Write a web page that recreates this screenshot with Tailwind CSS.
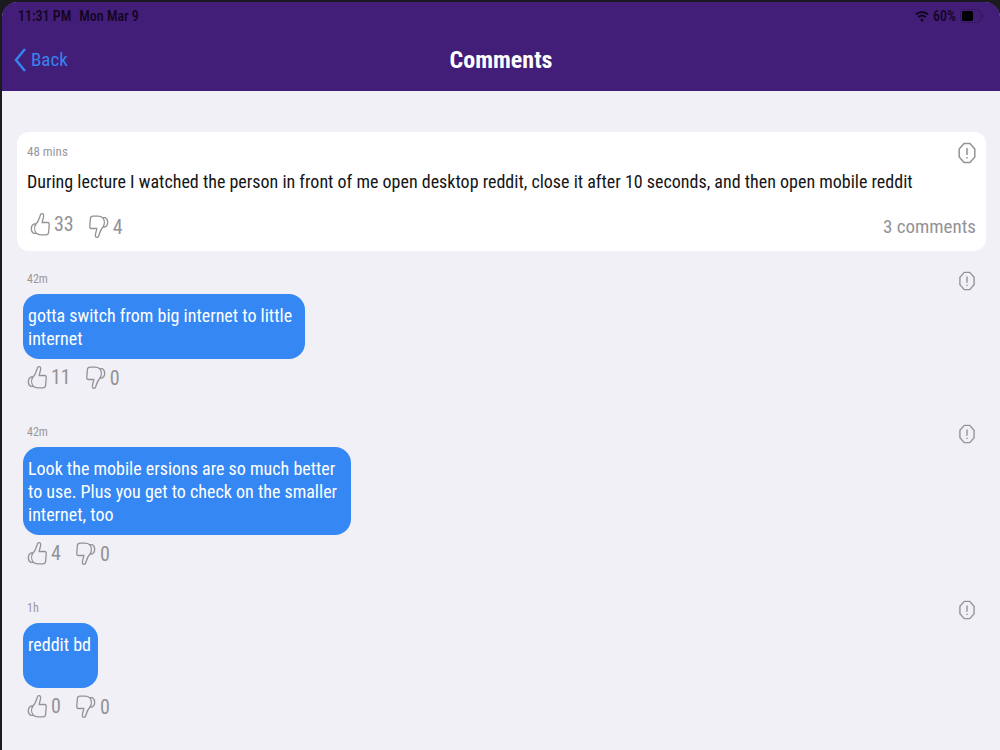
<!DOCTYPE html>
<html lang="en">
<head>
    <meta charset="UTF-8">
    <meta name="viewport" content="width=device-width, initial-scale=1.0">
    <title>Comments</title>
    <script src="https://cdn.jsdelivr.net/npm/@tailwindcss/browser@4"></script>
</head>
<body class="min-h-screen bg-[#1b1a1e] pt-0.5 pl-0.5 font-['Roboto_Condensed',Roboto,sans-serif]">
    <!-- Shared icons -->
    <svg class="hidden" aria-hidden="true">
        <symbol id="thumb" viewBox="0 0 20 24">
            <path d="M6 12 C8.500 9.500 9.200 6.500 10.200 3.500 C10.800 0.800 14 0.800 13.600 4.200 C13.400 6.500 12.400 8 12.200 10.500 L17.500 10.500 C19 10.500 19.300 11.500 19.200 13 L18.600 20.500 C18.400 22 17.700 22.800 16 22.800 L11 22.800 C9 22.800 7.500 22.300 6.300 21.300 C4.200 18.500 4.200 14.500 6 12 Z M6 12 L4 12 C0.500 13.500 0.500 19.500 3.600 21.300 L6.300 21.300" />
        </symbol>
        <symbol id="report" viewBox="0 0 18 22">
            <path d="M6 1.500 L12 1.500 L16.800 7 L16.800 15 L12 20.500 L6 20.500 L1.200 15 L1.200 7 Z M9 6 L9 13 M9 15 L9 16.500" />
        </symbol>
    </svg>

    <div class="min-h-[calc(100vh-2px)] rounded-t-2xl bg-[#f1f0f6]">
        <header class="h-[89px] rounded-t-[15px] bg-[#421e78]">
            <!-- Status bar -->
            <div class="flex h-7 items-center justify-between px-4 text-sm font-medium text-[#12051f]">
                <div class="flex gap-2">
                    <span>11:31 PM</span>
                    <span>Mon Mar 9</span>
                </div>
                <div class="flex items-center gap-1">
                    <svg class="h-3 w-3.5" viewBox="0 0 14 12" fill="none" stroke="currentColor" stroke-width="2">
                        <path d="M1 4.500 C4.500 1 9.500 1 13 4.500 M3.300 7.300 C5.500 5.200 8.500 5.200 10.700 7.300" />
                        <circle cx="7" cy="10" r="1.500" fill="currentColor" stroke="none" />
                    </svg>
                    <span>60%</span>
                    <svg class="h-3.5 w-6" viewBox="0 0 24 14">
                        <rect x="0.500" y="0.500" width="20" height="13" rx="3" fill="none" stroke="#351861" />
                        <rect x="2" y="2" width="11" height="10" rx="1.500" fill="#000" />
                        <path d="M22.500 5 L22.500 9" stroke="#351861" stroke-width="1.500" />
                    </svg>
                </div>
            </div>
            <!-- Navigation bar -->
            <nav class="grid grid-cols-[1fr_auto_1fr] items-center px-3 pt-4">
                <a href="#" class="flex items-center gap-[5px] text-[19px] leading-7 text-[#3583ee]">
                    <svg class="h-6 w-3" viewBox="0 0 12 24" fill="none" stroke="currentColor" stroke-width="2.500"><path d="M11 1 L2 12 L11 23" /></svg>
                    Back
                </a>
                <h1 class="text-2xl leading-7 font-bold text-white">Comments</h1>
            </nav>
        </header>

        <main class="pt-[41px] pr-3.5 pb-6 pl-[15px]">
            <!-- Original post -->
            <article class="rounded-xl bg-white px-2.5 pt-2.5 pb-3">
                <div class="flex h-5 justify-between">
                    <time class="text-[13px] leading-5 text-[#98989d]">48 mins</time>
                    <button type="button" aria-label="Report post" class="h-[22px] text-[#929297]"><svg class="h-[22px] w-[18px]" fill="none" stroke="currentColor" stroke-width="1.500"><use href="#report" /></svg></button>
                </div>
                <p class="mt-2 text-lg leading-6 text-[#141416]">During lecture I watched the person in front of me open desktop reddit, close it after 10 seconds, and then open mobile reddit</p>
                <div class="mt-[18px] flex items-end justify-between text-[#929297]">
                    <div class="flex gap-[15px] pl-[3px] text-xl leading-6">
                        <button type="button" aria-label="Like" class="flex items-center gap-1 pb-[3px]"><svg class="h-6 w-5" fill="none" stroke="currentColor" stroke-width="1.300"><use href="#thumb" /></svg>33</button>
                        <button type="button" aria-label="Dislike" class="flex items-center gap-1 pt-[3px]"><svg class="h-6 w-5 rotate-180" fill="none" stroke="currentColor" stroke-width="1.300"><use href="#thumb" /></svg>4</button>
                    </div>
                    <span class="text-[19px] leading-6">3 comments</span>
                </div>
            </article>

            <!-- Replies -->
            <ul class="flex flex-col gap-8 px-2.5 pt-[18px]">
                <li>
                    <div class="flex h-5 justify-between">
                        <time class="text-xs leading-5 text-[#98989d]">42m</time>
                        <button type="button" aria-label="Report comment" class="mt-0.5 h-5 text-[#929297]"><svg class="h-5 w-[18px]" fill="none" stroke="currentColor" stroke-width="1.500"><use href="#report" /></svg></button>
                    </div>
                    <p class="mt-[5px] -ml-1 min-h-[65px] w-[282px] rounded-2xl bg-[#3587f3] px-[5px] pt-[10px] pb-[9px] text-lg leading-[23px] text-white">gotta switch from big internet to little internet</p>
                    <div class="mt-1.5 flex gap-[15px] text-xl leading-6 text-[#929297]">
                        <button type="button" aria-label="Like" class="flex items-center gap-1 pb-px"><svg class="h-6 w-5" fill="none" stroke="currentColor" stroke-width="1.300"><use href="#thumb" /></svg>11</button>
                        <button type="button" aria-label="Dislike" class="flex items-center gap-1 pt-px"><svg class="h-6 w-5 rotate-180" fill="none" stroke="currentColor" stroke-width="1.300"><use href="#thumb" /></svg>0</button>
                    </div>
                </li>
                <li>
                    <div class="flex h-5 justify-between">
                        <time class="text-xs leading-5 text-[#98989d]">42m</time>
                        <button type="button" aria-label="Report comment" class="mt-0.5 h-5 text-[#929297]"><svg class="h-5 w-[18px]" fill="none" stroke="currentColor" stroke-width="1.500"><use href="#report" /></svg></button>
                    </div>
                    <p class="mt-[5px] -ml-1 min-h-[65px] w-[328px] rounded-2xl bg-[#3587f3] px-[5px] pt-[10px] pb-[9px] text-lg leading-[23px] text-white">Look the mobile ersions are so much better to use. Plus you get to check on the smaller internet, too</p>
                    <div class="mt-1.5 flex gap-[15px] text-xl leading-6 text-[#929297]">
                        <button type="button" aria-label="Like" class="flex items-center gap-1 pb-px"><svg class="h-6 w-5" fill="none" stroke="currentColor" stroke-width="1.300"><use href="#thumb" /></svg>4</button>
                        <button type="button" aria-label="Dislike" class="flex items-center gap-1 pt-px"><svg class="h-6 w-5 rotate-180" fill="none" stroke="currentColor" stroke-width="1.300"><use href="#thumb" /></svg>0</button>
                    </div>
                </li>
                <li>
                    <div class="flex h-5 justify-between">
                        <time class="text-xs leading-5 text-[#98989d]">1h</time>
                        <button type="button" aria-label="Report comment" class="mt-0.5 h-5 text-[#929297]"><svg class="h-5 w-[18px]" fill="none" stroke="currentColor" stroke-width="1.500"><use href="#report" /></svg></button>
                    </div>
                    <p class="mt-[5px] -ml-1 min-h-[65px] w-[75px] rounded-2xl bg-[#3587f3] px-[5px] pt-[10px] pb-[9px] text-lg leading-[23px] text-white">reddit bd</p>
                    <div class="mt-1.5 flex gap-[15px] text-xl leading-6 text-[#929297]">
                        <button type="button" aria-label="Like" class="flex items-center gap-1 pb-px"><svg class="h-6 w-5" fill="none" stroke="currentColor" stroke-width="1.300"><use href="#thumb" /></svg>0</button>
                        <button type="button" aria-label="Dislike" class="flex items-center gap-1 pt-px"><svg class="h-6 w-5 rotate-180" fill="none" stroke="currentColor" stroke-width="1.300"><use href="#thumb" /></svg>0</button>
                    </div>
                </li>
            </ul>
        </main>
    </div>
</body>
</html>
